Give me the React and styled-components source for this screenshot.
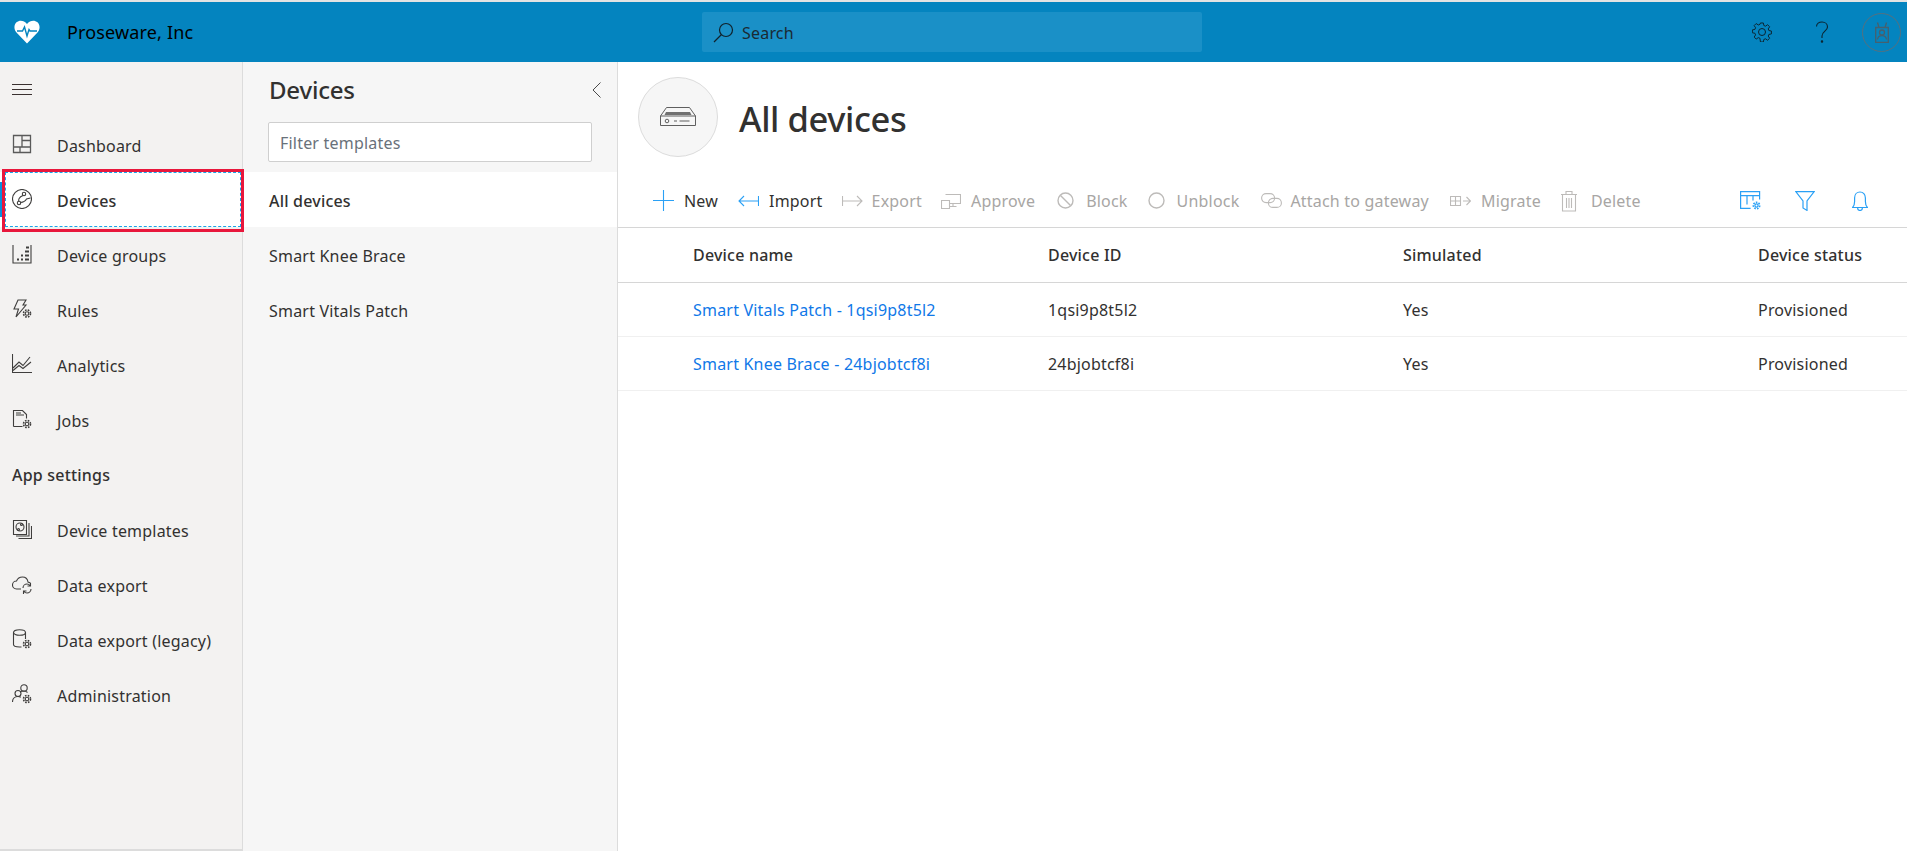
import React from 'react'
import styled, { createGlobalStyle } from 'styled-components'

const GlobalStyle = createGlobalStyle`
  html, body { margin: 0; padding: 0; height: 100%; background: #fff; overflow: hidden; }
  body { font-family: "Noto Sans", "Open Sans", sans-serif; color: #323130; }
  * { box-sizing: border-box; }
`

const Page = styled.div`
  width: 1907px;
  height: 851px;
  display: flex;
  flex-direction: column;
  border-top: 2px solid #e3e3e3;
`

const Header = styled.header`
  height: 60px;
  flex: none;
  background: #0484bf;
  display: flex;
  align-items: center;
  position: relative;
`

const Logo = styled.svg`
  width: 26px;
  height: 24px;
  margin-left: 14px;
`

const Brand = styled.div`
  margin-left: 27px;
  font-size: 18px;
  letter-spacing: 0.15px;
  color: #000;
  width: 635px;
`

const Search = styled.div`
  width: 500px;
  height: 40px;
  background: #1a90c7;
  border-radius: 2px;
  display: flex;
  align-items: center;
  gap: 8px;
  padding-left: 11px;
  font-size: 16px;
  letter-spacing: 0.2px;
  color: #1b2a33;
  span { padding-top: 2px; }
`

const HeaderIcons = styled.div`
  margin-left: auto;
  display: flex;
  align-items: center;
  padding-right: 6px;
`

const HeaderIcon = styled.div`
  width: 60px;
  display: flex;
  justify-content: center;
  align-items: center;
`

const Avatar = styled.div`
  width: 39px;
  height: 39px;
  border-radius: 50%;
  border: 1px solid #56707e;
  display: flex;
  align-items: center;
  justify-content: center;
  margin-left: 10px;
`

const Body = styled.div`
  flex: 1;
  display: flex;
  min-height: 0;
`

const Sidebar = styled.nav`
  width: 243px;
  flex: none;
  background: #f3f2f1;
  border-right: 1px solid #dcdcdc;
  border-bottom: 2px solid #dcdcdc;
`

const Burger = styled.div`
  height: 55px;
  padding: 22px 0 0 12px;
  svg { display: block; }
`

const NavItem = styled.div`
  height: 55px;
  display: flex;
  align-items: center;
  padding: 2px 0 0 12px;
  font-size: 16px;
  letter-spacing: 0.2px;
  position: relative;
  background: ${p => (p.$active ? '#fff' : 'transparent')};
  font-weight: ${p => (p.$active ? 500 : 400)};
  color: #323130;
  svg { flex: none; margin: -3px 25px 0 0; }
`

const ActiveBar = styled.span`
  position: absolute;
  left: 0;
  top: 10px;
  bottom: 10px;
  width: 2px;
  background: #0a8fdc;
`

const FocusRing = styled.span`
  position: absolute;
  inset: 0 1px 0 5px;
  border: 1px dashed #1ca5e8;
`

const Callout = styled.span`
  position: absolute;
  left: 2px;
  top: -3px;
  width: 242px;
  height: 63px;
  border: 3px solid #e8173c;
  z-index: 2;
`

const NavHeading = styled.div`
  height: 55px;
  display: flex;
  align-items: center;
  padding-left: 12px;
  font-size: 16px;
  font-weight: 500;
  letter-spacing: 0.2px;
`

const SubPanel = styled.aside`
  width: 375px;
  flex: none;
  background: #f6f6f6;
  border-right: 1px solid #dcdcdc;
`

const SubHead = styled.div`
  height: 60px;
  padding: 0 16px 5px 26px;
  display: flex;
  align-items: center;
  justify-content: space-between;
  font-size: 24px;
  font-weight: 500;
  letter-spacing: -0.2px;
`

const Filter = styled.div`
  width: 324px;
  height: 40px;
  margin-left: 25px;
  background: #fff;
  border: 1px solid #cfcfcf;
  border-radius: 2px;
  display: flex;
  align-items: center;
  padding: 2px 0 0 11px;
  font-size: 16px;
  letter-spacing: 0.2px;
  color: #69717a;
`

const SubList = styled.div`
  margin-top: 10px;
`

const SubItem = styled.div`
  height: 55px;
  display: flex;
  align-items: center;
  padding: 2px 0 0 26px;
  font-size: 16px;
  letter-spacing: 0.2px;
  background: ${p => (p.$active ? '#fff' : 'transparent')};
  font-weight: ${p => (p.$active ? 500 : 400)};
`

const Main = styled.main`
  flex: 1;
  min-width: 0;
  background: #fff;
`

const TitleRow = styled.div`
  height: 110px;
  padding: 15px 0 0 20px;
  display: flex;
  align-items: flex-start;
`

const TitleBadge = styled.div`
  width: 80px;
  height: 80px;
  border-radius: 50%;
  background: #f6f6f6;
  border: 1px solid #dcdcdc;
  display: flex;
  align-items: center;
  justify-content: center;
`

const Title = styled.h1`
  margin: 2px 0 0 21px;
  font-size: 34.500px;
  line-height: 80px;
  font-weight: 500;
  letter-spacing: -0.4px;
  color: #323130;
`

const Toolbar = styled.div`
  height: 56px;
  display: flex;
  align-items: center;
  padding: 2px 0 0 35px;
  border-bottom: 1px solid #d6d6d6;
`

const ToolButton = styled.div`
  display: flex;
  align-items: center;
  gap: ${p => p.$gap}px;
  margin-right: ${p => p.$after}px;
  font-size: 16px;
  letter-spacing: 0.2px;
  color: ${p => (p.$disabled ? '#a8a6a4' : '#323130')};
`

const ToolIcons = styled.div`
  margin-left: auto;
  display: flex;
  align-items: center;
  gap: 34px;
  padding-right: 39px;
`

const BellIcon = styled.svg`
  margin-left: 3px;
`

const Row = styled.div`
  display: grid;
  grid-template-columns: 355px 355px 355px 1fr;
  padding: ${p => (p.$head ? '0' : '1px')} 0 0 75px;
  align-items: center;
  height: ${p => (p.$head ? '55px' : '54px')};
  border-bottom: 1px solid ${p => (p.$head ? '#d6d6d6' : '#f0f0f0')};
  font-size: 16px;
  letter-spacing: 0.2px;
  font-weight: ${p => (p.$head ? 500 : 400)};
  color: #323130;
`

const DeviceLink = styled.a`
  color: #1078e8;
`

const Ico = ({ children, w = 20, h = 20, stroke = '#3f3e3d' }) => (
  <svg width={w} height={h} viewBox={`0 0 ${w} ${h}`} fill="none" stroke={stroke} strokeWidth="1.100">
    {children}
  </svg>
)

const Gear = ({ x, y, r = 3.500 }) => (
  <g>
    <circle cx={x} cy={y} r={r * 0.5} />
    <circle cx={x} cy={y} r={r} strokeDasharray="1.600 1.200" strokeWidth="1.600" />
  </g>
)

const navIcons = {
  dashboard: (
    <Ico>
      <path d="M1.500 1.500h17v17h-17zM10 1.500V13M1.500 13h17M10 6.500h8.500M8 13v5.500" stroke="#5a5a5a" strokeWidth="1.300" />
    </Ico>
  ),
  devices: (
    <Ico>
      <circle cx="10" cy="10" r="9.500" />
      <circle cx="12" cy="5" r="1.700" />
      <circle cx="7" cy="14" r="1.700" />
      <path d="M11 6.500C7 8 6 11 7 12.300M8.500 13.500c3-.3 5-1.500 6-3.500l4-1" />
    </Ico>
  ),
  groups: (
    <Ico>
      <path d="M1 1v18h18V1" />
      <path d="M5 15.500h2M9 15.500h2M13 15.500h4M9 11.500h2M13 11.500h4M13 7.500h4M14 3.500h3" strokeWidth="2" />
    </Ico>
  ),
  rules: (
    <Ico>
      <path d="M6 1h8l-3 5h3l-10 12 2.500-8H2z" />
      <Gear x={15} y={14.500} r={3.500} />
    </Ico>
  ),
  analytics: (
    <Ico>
      <path d="M.5 0v18.500h19.500M1 14l6-6 4 3.500L18 3" />
      <path d="M1 16.500l6-5 4 3L19 8" />
    </Ico>
  ),
  jobs: (
    <Ico>
      <path d="M1.500 17.500V1.500h9l4 4v4M1.500 17.500h9M4 4h5M4 6h8" />
      <Gear x={15} y={15} r={3.500} />
    </Ico>
  ),
  templates: (
    <Ico>
      <path d="M1.500 1.500h13v14h-13zM4 17h13V4M6.500 19.500h13V7" />
      <circle cx="8" cy="8" r="4" />
      <circle cx="9.500" cy="5.500" r="1" />
      <circle cx="6.500" cy="10.500" r="1" />
    </Ico>
  ),
  cloud: (
    <Ico>
      <path d="M9 15H4.500C2 15 .5 13 .5 11c0-2.500 2-4 4-4C5.500 4.500 8 3 10.500 3c3 0 5 2 5.500 5l2.500 1" />
      <path d="M11 14c0-2.500 2-4 4-4 1.200 0 2.300.5 3 1.500M19 15c0 2.500-2 4-4 4-1.200 0-2.300-.5-3-1.500M18.500 9v3h-3M11.500 20v-3h3" />
    </Ico>
  ),
  legacy: (
    <Ico>
      <ellipse cx="7.500" cy="3.500" rx="6" ry="2.800" />
      <path d="M1.500 3.500v12c0 1.500 2.500 2.500 6 2.500h2M13.500 3.500V10" />
      <Gear x={15} y={15} r={3.500} />
    </Ico>
  ),
  admin: (
    <Ico>
      <circle cx="12" cy="4" r="3.200" />
      <circle cx="6" cy="9.500" r="3" />
      <path d="M.5 18c0-3.500 2.500-5.500 5.500-5.500 1.200 0 2 .3 2.800.8M8 8c1-1 2.500-1 4-1 1.500 0 2.500.5 3.500 1.500" />
      <Gear x={15} y={15} r={3.500} />
    </Ico>
  ),
}

const navItems = [
  { key: 'groups', label: 'Device groups' },
  { key: 'rules', label: 'Rules' },
  { key: 'analytics', label: 'Analytics' },
  { key: 'jobs', label: 'Jobs' },
]

const settingsItems = [
  { key: 'templates', label: 'Device templates' },
  { key: 'cloud', label: 'Data export' },
  { key: 'legacy', label: 'Data export (legacy)' },
  { key: 'admin', label: 'Administration' },
]

const BLUE = '#2aa0f5'
const GREY = '#bdbbb9'

const tools = [
  {
    label: 'New',
    gap: 10,
    after: 20,
    icon: (
      <Ico w={21} h={21} stroke={BLUE}>
        <path d="M10.500 0v21M0 10.500h21" />
      </Ico>
    ),
  },
  {
    label: 'Import',
    gap: 10,
    after: 19,
    icon: (
      <Ico w={21} h={14} stroke={BLUE}>
        <path d="M20.500 2v10M20 7H1M6 2L1 7l5 5" />
      </Ico>
    ),
  },
  {
    label: 'Export',
    disabled: true,
    gap: 9,
    after: 19,
    icon: (
      <Ico w={21} h={14} stroke={GREY}>
        <path d="M.5 2v10M1 7h19M15 2l5 5-5 5" />
      </Ico>
    ),
  },
  {
    label: 'Approve',
    disabled: true,
    gap: 10,
    after: 22,
    icon: (
      <Ico w={20} h={16} stroke={GREY}>
        <path d="M4.500 1.500h15v9h-11M.5 7.500h8v8h-8zM12 10.500v3M8.500 13.500h7" />
      </Ico>
    ),
  },
  {
    label: 'Block',
    disabled: true,
    gap: 12,
    after: 20,
    icon: (
      <Ico w={17} h={17} stroke={GREY}>
        <circle cx="8.500" cy="8.500" r="7.500" strokeWidth="1.400" />
        <path d="M3.500 3.500l10 10" strokeWidth="1.400" />
      </Ico>
    ),
  },
  {
    label: 'Unblock',
    disabled: true,
    gap: 12,
    after: 22,
    icon: (
      <Ico w={17} h={17} stroke={GREY}>
        <circle cx="8.500" cy="8.500" r="7.500" strokeWidth="1.400" />
      </Ico>
    ),
  },
  {
    label: 'Attach to gateway',
    disabled: true,
    gap: 8,
    after: 21,
    icon: (
      <Ico w={21} h={15} stroke={GREY}>
        <rect x=".6" y=".6" width="13" height="9" rx="4.500" />
        <rect x="7.400" y="5.400" width="13" height="9" rx="4.500" />
      </Ico>
    ),
  },
  {
    label: 'Migrate',
    disabled: true,
    gap: 10,
    after: 19,
    icon: (
      <Ico w={21} h={12} stroke={GREY}>
        <path d="M.5 1.500h10v9H.5zM5.500 1.500v9M.5 6h10M13 6h7M16.500 2l4 4-4 4" />
      </Ico>
    ),
  },
  {
    label: 'Delete',
    disabled: true,
    gap: 13,
    after: 0,
    icon: (
      <Ico w={18} h={22} stroke={GREY}>
        <path d="M1 4.500h16M6 4.500V1.500h6v3M2.500 4.500v16.500h13V4.500M6.500 8v10M9 8v10M11.500 8v10" />
      </Ico>
    ),
  },
]

const rows = [
  { name: 'Smart Vitals Patch - 1qsi9p8t5l2', id: '1qsi9p8t5l2' },
  { name: 'Smart Knee Brace - 24bjobtcf8i', id: '24bjobtcf8i' },
]

const App = () => (
  <>
    <GlobalStyle />
    <Page>
      <Header>
        <Logo viewBox="0 0 26 24">
          <path
            fill="#fff"
            d="M13 23.500 2.500 12.500C-.5 9 0 4.500 2.500 2.300 5.500-.3 10 .3 13 4c3-3.700 7.500-4.300 10.500-1.700 2.500 2.200 3 6.700 0 10.200z"
          />
          <path fill="none" stroke="#0484bf" strokeWidth="1.400" d="M3 11h5.500l2-4 2.500 9 2-6.500 1 1.500H23" />
        </Logo>
        <Brand>Proseware, Inc</Brand>
        <Search>
          <svg width="21" height="21" viewBox="0 0 21 21" fill="none" stroke="#10222c" strokeWidth="1.200">
            <circle cx="13" cy="8" r="6.500" />
            <path d="M8.500 12.500L1 20" />
          </svg>
          <span>Search</span>
        </Search>
        <HeaderIcons>
          <HeaderIcon>
            <svg width="20" height="20" viewBox="0 0 20 20" fill="none" stroke="#0c2430" strokeWidth="1">
              <circle cx="10" cy="10" r="3.500" />
              <path d="M8.500.8h3l.5 2.600 1.700.7 2.200-1.500 2.100 2.100-1.500 2.200.7 1.700 2.600.5v3l-2.600.5-.7 1.700 1.500 2.200-2.100 2.100-2.200-1.500-1.700.7-.5 2.600h-3L8 16.600l-1.700-.7-2.200 1.500L2 15.300l1.500-2.200-.7-1.700-2.600-.5v-3l2.600-.5.7-1.700L2 3.500l2.100-2.100 2.200 1.500L8 2.200z" transform="translate(.2 .2) scale(.97)" />
            </svg>
          </HeaderIcon>
          <HeaderIcon>
            <svg width="14" height="22" viewBox="0 0 14 22" fill="none" stroke="#0c2430" strokeWidth="1.100">
              <path d="M1.500 5.500C1.500 2.500 4 1 7 1c3 0 5.500 2 5.500 5 0 4-5.500 4.500-5.500 9v2" />
              <circle cx="7" cy="20.500" r=".7" fill="#0c2430" />
            </svg>
          </HeaderIcon>
          <Avatar>
            <svg width="14" height="21" viewBox="0 0 14 21" fill="none" stroke="#46606e" strokeWidth="1.300">
              <path d="M.7 5.500h12.600v15H.7zM4 5.500L2.500.5M10 5.500l1.500-5" />
              <circle cx="7" cy="10.500" r="2.500" />
              <path d="M2.500 17.500c.4-2.500 2.200-3.800 4.500-3.800s4.100 1.300 4.500 3.800" />
            </svg>
          </Avatar>
        </HeaderIcons>
      </Header>
      <Body>
        <Sidebar>
          <Burger>
            <svg width="20" height="11" viewBox="0 0 20 11" stroke="#3a3130" strokeWidth="1">
              <path d="M0 .5h20M0 5.500h20M0 10.500h20" />
            </svg>
          </Burger>
          <NavItem>
            {navIcons.dashboard}
            Dashboard
          </NavItem>
          <NavItem $active>
            <ActiveBar />
            <FocusRing />
            <Callout />
            {navIcons.devices}
            Devices
          </NavItem>
          {navItems.map(item => (
            <NavItem key={item.key}>
              {navIcons[item.key]}
              {item.label}
            </NavItem>
          ))}
          <NavHeading>App settings</NavHeading>
          {settingsItems.map(item => (
            <NavItem key={item.key}>
              {navIcons[item.key]}
              {item.label}
            </NavItem>
          ))}
        </Sidebar>
        <SubPanel>
          <SubHead>
            Devices
            <svg width="9" height="16" viewBox="0 0 9 16" fill="none" stroke="#4a4a4a" strokeWidth="1">
              <path d="M8.500.5L1 8l7.500 7.500" />
            </svg>
          </SubHead>
          <Filter>Filter templates</Filter>
          <SubList>
            <SubItem $active>All devices</SubItem>
            <SubItem>Smart Knee Brace</SubItem>
            <SubItem>Smart Vitals Patch</SubItem>
          </SubList>
        </SubPanel>
        <Main>
          <TitleRow>
            <TitleBadge>
              <svg width="36" height="20" viewBox="0 0 36 20" fill="none" stroke="#5f5f5f" strokeWidth="1">
                <path d="M6.500.5h23L35.500 9v9.500h-35V9zM.5 9h35" />
                <path d="M6 5h24L31.500 8h-27z" fill="#707070" stroke="none" />
                <circle cx="7" cy="14" r="1.800" />
                <path d="M14 14h3M19.500 14h10" strokeWidth="1.200" />
              </svg>
            </TitleBadge>
            <Title>All devices</Title>
          </TitleRow>
          <Toolbar>
            {tools.map(tool => (
              <ToolButton key={tool.label} $disabled={tool.disabled} $gap={tool.gap} $after={tool.after}>
                {tool.icon}
                {tool.label}
              </ToolButton>
            ))}
            <ToolIcons>
              <svg width="21" height="19" viewBox="0 0 21 19" fill="none" stroke={BLUE} strokeWidth="1.200">
                <path d="M.6.6h19v4H.6zM.6 4.600v12.800h10M7 4.600v9M13 4.600v5M19.600 4.600v4" />
                <Gear x={16.500} y={14.500} r={3.200} />
              </svg>
              <svg width="20" height="20" viewBox="0 0 20 20" fill="none" stroke={BLUE} strokeWidth="1.200">
                <path d="M.8.600h18.400L12 10v9.400l-4-2.500V10z" />
              </svg>
              <BellIcon width="16" height="20" viewBox="0 0 16 20" fill="none" stroke={BLUE} strokeWidth="1.200">
                <path d="M.6 16.500h14.800c-1.500-1.500-2-3-2-6V7c0-3.500-2.300-6-5.400-6S2.600 3.500 2.600 7v3.500c0 3-.5 4.500-2 6zM5.500 16.500c0 1.800 1 3 2.500 3s2.500-1.200 2.500-3" />
              </BellIcon>
            </ToolIcons>
          </Toolbar>
          <Row $head>
            <span>Device name</span>
            <span>Device ID</span>
            <span>Simulated</span>
            <span>Device status</span>
          </Row>
          {rows.map(row => (
            <Row key={row.id}>
              <DeviceLink>{row.name}</DeviceLink>
              <span>{row.id}</span>
              <span>Yes</span>
              <span>Provisioned</span>
            </Row>
          ))}
        </Main>
      </Body>
    </Page>
  </>
)

export default App
